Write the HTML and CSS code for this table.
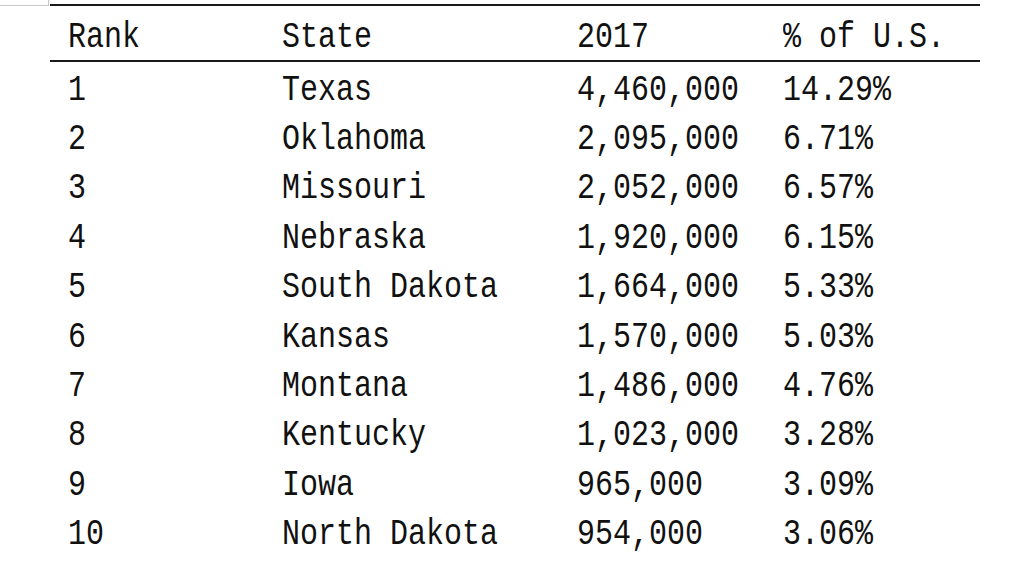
FILE: index.html
```html
<!DOCTYPE html>
<html>
<head>
<meta charset="utf-8">
<link rel="stylesheet" href="styles.css">
</head>
<body>
<div class="page">
  <div class="corner-cell"></div>
  <table class="rank-table">
    <thead>
      <tr><th><span class="t">Rank</span></th><th><span class="t">State</span></th><th><span class="t">2017</span></th><th><span class="t">% of U.S.</span></th></tr>
    </thead>
    <tbody>
      <tr><td><span class="t">1</span></td><td><span class="t">Texas</span></td><td><span class="t">4,460,000</span></td><td><span class="t">14.29%</span></td></tr>
      <tr><td><span class="t">2</span></td><td><span class="t">Oklahoma</span></td><td><span class="t">2,095,000</span></td><td><span class="t">6.71%</span></td></tr>
      <tr><td><span class="t">3</span></td><td><span class="t">Missouri</span></td><td><span class="t">2,052,000</span></td><td><span class="t">6.57%</span></td></tr>
      <tr><td><span class="t">4</span></td><td><span class="t">Nebraska</span></td><td><span class="t">1,920,000</span></td><td><span class="t">6.15%</span></td></tr>
      <tr><td><span class="t">5</span></td><td><span class="t">South Dakota</span></td><td><span class="t">1,664,000</span></td><td><span class="t">5.33%</span></td></tr>
      <tr><td><span class="t">6</span></td><td><span class="t">Kansas</span></td><td><span class="t">1,570,000</span></td><td><span class="t">5.03%</span></td></tr>
      <tr><td><span class="t">7</span></td><td><span class="t">Montana</span></td><td><span class="t">1,486,000</span></td><td><span class="t">4.76%</span></td></tr>
      <tr><td><span class="t">8</span></td><td><span class="t">Kentucky</span></td><td><span class="t">1,023,000</span></td><td><span class="t">3.28%</span></td></tr>
      <tr><td><span class="t">9</span></td><td><span class="t">Iowa</span></td><td><span class="t">965,000</span></td><td><span class="t">3.09%</span></td></tr>
      <tr><td><span class="t">10</span></td><td><span class="t">North Dakota</span></td><td><span class="t">954,000</span></td><td><span class="t">3.06%</span></td></tr>
    </tbody>
  </table>
</div>
</body>
</html>
```

FILE: styles.css
```css
html, body {
  margin: 0;
  padding: 0;
  background: #ffffff;
}

.page {
  position: relative;
  width: 1024px;
  height: 577px;
  overflow: hidden;
  padding-left: 50px;
  padding-top: 4px;
  box-sizing: border-box;
}

.corner-cell {
  position: absolute;
  left: 0;
  top: 0;
  width: 48px;
  height: 5px;
  border-right: 1px solid #c8c8c8;
  border-bottom: 1px solid #c8c8c8;
}

.rank-table {
  border-collapse: collapse;
  width: 930px;
  font-family: "Liberation Mono", monospace;
  font-size: 30px;
  color: #111111;
  table-layout: fixed;
}

.rank-table th,
.rank-table td {
  padding: 8px 0 0 18px;
  text-align: left;
  font-weight: normal;
  white-space: nowrap;
  vertical-align: middle;
}

.rank-table th:nth-child(1) { width: 196px; }
.rank-table th:nth-child(2) { width: 277px; }
.rank-table th:nth-child(3) { width: 188px; }

.rank-table thead tr {
  height: 56px;
  border-top: 2px solid #1a1a1a;
  border-bottom: 2px solid #1a1a1a;
}

.rank-table tbody tr {
  height: 49.4px;
}

.t {
  display: inline-block;
  transform: scaleY(1.2);
}
```
